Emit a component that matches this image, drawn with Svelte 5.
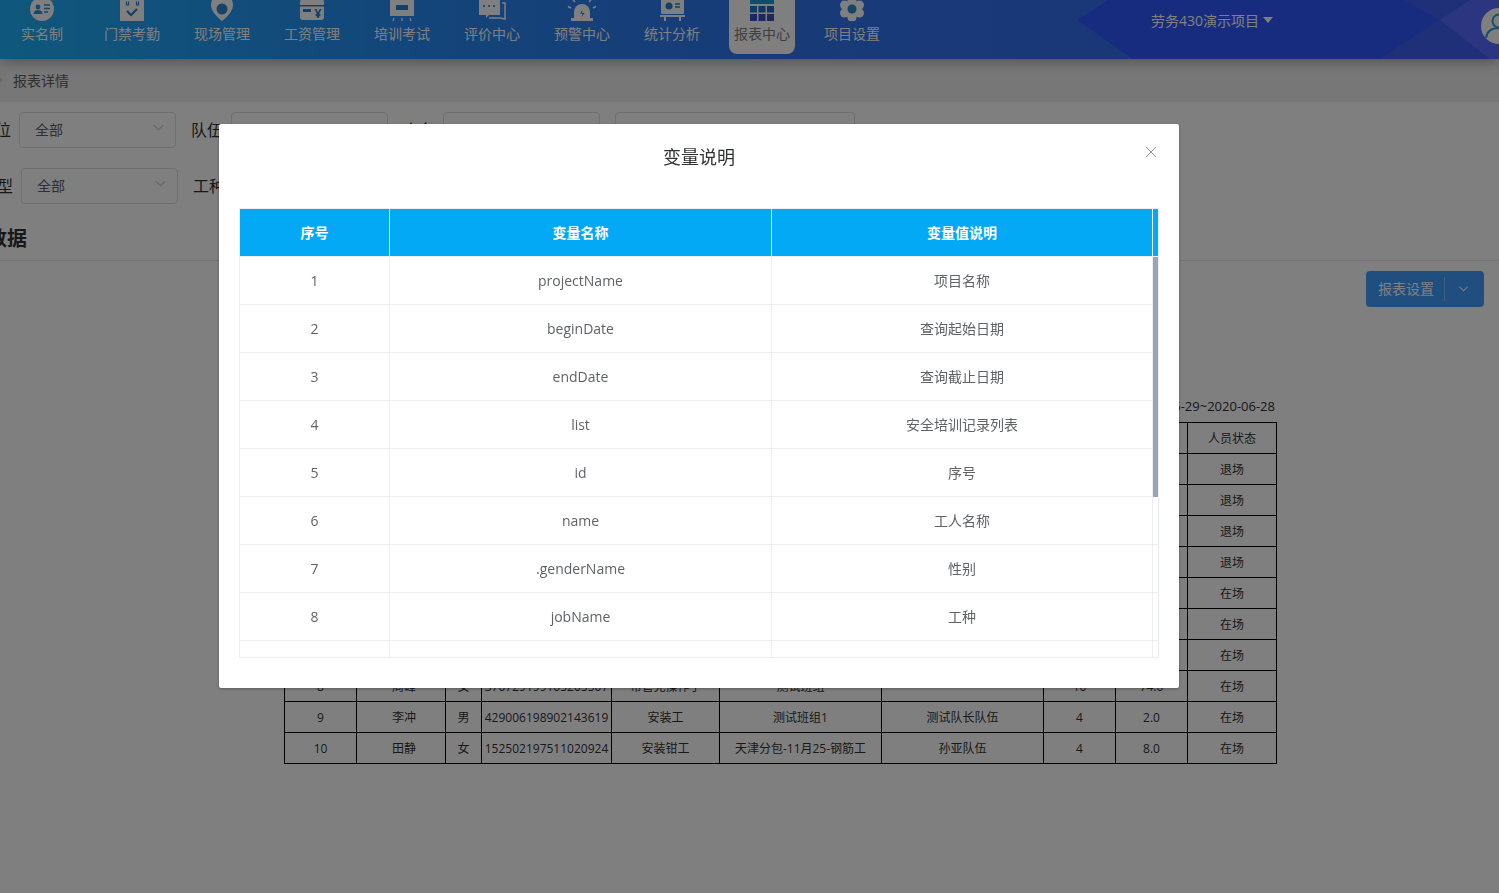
<script lang="ts">
    const navItems = ["实名制", "门禁考勤", "现场管理", "工资管理", "培训考试", "评价中心", "预警中心", "统计分析", "报表中心", "项目设置"];

    const variables = [
        ["1", "projectName", "项目名称"],
        ["2", "beginDate", "查询起始日期"],
        ["3", "endDate", "查询截止日期"],
        ["4", "list", "安全培训记录列表"],
        ["5", "id", "序号"],
        ["6", "name", "工人名称"],
        ["7", ".genderName", "性别"],
        ["8", "jobName", "工种"],
        ["9", "", ""],
    ];

    const reportRows = [
        { no: "1", status: "退场" },
        { no: "2", status: "退场" },
        { no: "3", status: "退场" },
        { no: "4", status: "退场" },
        { no: "5", status: "在场" },
        { no: "6", status: "在场" },
        { no: "7", status: "在场" },
        { no: "8", name: "周峰", sex: "女", card: "370729199105205507", job: "布管充操作手", group: "测试班组", days: "10", hours: "74.0", status: "在场" },
        { no: "9", name: "李冲", sex: "男", card: "429006198902143619", job: "安装工", group: "测试班组1", team: "测试队长队伍", days: "4", hours: "2.0", status: "在场" },
        { no: "10", name: "田静", sex: "女", card: "152502197511020924", job: "安装钳工", group: "天津分包-11月25-钢筋工", team: "孙亚队伍", days: "4", hours: "8.0", status: "在场" },
    ];
</script>

<div class="page">
    <header class="topbar">
        <svg class="topbar-bg" viewBox="0 0 1499 59" preserveAspectRatio="none">
            <polygon points="1077,20 1108,0 1405,0 1440,20 1380,59 1133,59" fill="#3058ff" />
            <polygon points="1405,0 1499,0 1499,59 1380,59 1440,20" fill="#4060f0" />
            <polygon points="1440,20 1470,0 1499,0 1499,59 1490,59" fill="#586aff" />
        </svg>
        <nav class="nav">
            {#each navItems as item, i}
                <div class="nav-item" class:active={i === 8}>
                    <svg class="nav-icon" viewBox="0 0 30 30">
                        {#if i === 0}
                            <circle cx="15" cy="18" r="12" fill="#fff" />
                            <circle cx="11" cy="16" r="2.4" fill="#2a90d8" />
                            <path d="M6.5 23c.4-3 2-4 4.5-4s4.100 1 4.500 4z" fill="#2a90d8" />
                            <path d="M17 14h6M17 17.500h6M17 21h4" stroke="#2a90d8" stroke-width="1.300" />
                        {:else if i === 1}
                            <path d="M3 4h24v26H3z" fill="#fff" />
                            <path d="M8 1v12M22 1v12" stroke="#fff" stroke-width="2" />
                            <path d="M9.500 10.500v3.500h2v-3.500M19.500 10.500v3.500h2v-3.500" fill="none" stroke="#2a80cc" stroke-width="1.200" />
                            <path d="M10 20l4 4 6-6" fill="none" stroke="#2a80cc" stroke-width="2.200" />
                        {:else if i === 2}
                            <path d="M15 3C8.500 3 4 8 4 14c0 6 6 12 11 16 5-4 11-10 11-16 0-6-4.500-11-11-11z" fill="#fff" />
                            <circle cx="15" cy="18" r="5.500" fill="#2a88cc" />
                        {:else if i === 3}
                            <rect x="3" y="8" width="24" height="21" rx="3" fill="#fff" />
                            <path d="M2 14h26v1.500H2z" fill="#2a80cc" />
                            <rect x="6" y="18" width="8" height="3" fill="#2a80cc" />
                            <text class="yen" x="21" y="27" text-anchor="middle">¥</text>
                        {:else if i === 4}
                            <rect x="3" y="5" width="24" height="20" fill="#fff" />
                            <rect x="9" y="14" width="12" height="5" fill="#2a80cc" />
                            <path d="M7 27l-1 3M15 27v3M23 27l1 3" stroke="#fff" stroke-width="1.300" />
                        {:else if i === 5}
                            <path d="M2 6h21v18H12l-3 3v-3H2z" fill="#fff" />
                            <path d="M25 12h3v16l-5-1H12" fill="none" stroke="#fff" stroke-width="1.500" />
                            <circle cx="7" cy="15" r="1.100" fill="#2a80cc" />
                            <circle cx="12" cy="15" r="1.100" fill="#2a80cc" />
                            <circle cx="17" cy="15" r="1.100" fill="#2a80cc" />
                        {:else if i === 6}
                            <path d="M7 27v-6a8 8 0 0 1 16 0v6z" fill="#fff" />
                            <rect x="4" y="27" width="22" height="3" fill="#fff" />
                            <path d="M15 9V5M8 11L5.500 8M22 11l2.500-3M4 17l-3-1.500M26 17l3-1.500" stroke="#fff" stroke-width="1.500" />
                            <path d="M15.500 19l-2.500 3.500h2.500L14.500 26l3-4h-2.500z" fill="#2a70c8" />
                        {:else if i === 7}
                            <rect x="4" y="6" width="23" height="17" rx="1" fill="#fff" />
                            <path d="M3 24h25v2H3zM7 26h2v4H7zM22 26h2v4h-2z" fill="#fff" />
                            <circle cx="12" cy="15" r="3.500" fill="#2a80cc" />
                            <path d="M18 13h5M18 16h5" stroke="#2a80cc" stroke-width="1.300" />
                        {:else if i === 8}
                            <rect x="3" y="4" width="24" height="9" fill="#1d9bd6" />
                            <rect x="3" y="15" width="7" height="6.500" fill="#1f79c8" />
                            <rect x="11.500" y="15" width="7" height="6.500" fill="#2070c8" />
                            <rect x="20" y="15" width="7" height="6.500" fill="#2268c4" />
                            <rect x="3" y="23" width="7" height="7" fill="#3a50c0" />
                            <rect x="11.500" y="23" width="7" height="7" fill="#3a50c0" />
                            <rect x="20" y="23" width="7" height="7" fill="#3a50c0" />
                        {:else}
                            <g fill="#fff">
                                <circle cx="15" cy="18" r="9" />
                                <circle cx="15" cy="9.500" r="4.500" />
                                <circle cx="15" cy="26.500" r="4.500" />
                                <circle cx="7.500" cy="14" r="4.500" />
                                <circle cx="22.500" cy="14" r="4.500" />
                                <circle cx="7.500" cy="22" r="4.500" />
                                <circle cx="22.500" cy="22" r="4.500" />
                            </g>
                            <circle cx="15" cy="18" r="4.500" fill="#2a88cc" />
                        {/if}
                    </svg>
                    <span>{item}</span>
                </div>
            {/each}
        </nav>
        <div class="project">
            <span>劳务430演示项目</span>
            <i class="caret"></i>
        </div>
        <svg class="avatar" viewBox="0 0 36 36">
            <circle cx="18" cy="18" r="18" fill="#fff" />
            <circle cx="18" cy="13" r="6.500" fill="none" stroke="#2a9fd8" stroke-width="2" />
            <path d="M5 30c1-7 6-10 13-10s12 3 13 10" fill="none" stroke="#2a9fd8" stroke-width="2" />
        </svg>
    </header>

    <div class="crumb">
        <svg class="crumb-arrow" viewBox="0 0 8 12"><path d="M1 1l5 5-5 5" fill="none" stroke="#c0c4cc" stroke-width="1.200" /></svg>
        <span>报表详情</span>
    </div>

    <div class="filters">
        <div class="filter-row">
            <span class="filter-label">单位</span>
            <div class="select"><span>全部</span><svg viewBox="0 0 12 8"><path d="M1 1l5 5 5-5" fill="none" stroke="#c0c4cc" stroke-width="1.100" /></svg></div>
            <span class="filter-label next">队伍</span>
            <div class="select"></div>
            <span class="filter-label next">人名</span>
            <div class="select"></div>
            <div class="select wide"></div>
        </div>
        <div class="filter-row row-two">
            <span class="filter-label">类型</span>
            <div class="select"><span>全部</span><svg viewBox="0 0 12 8"><path d="M1 1l5 5 5-5" fill="none" stroke="#c0c4cc" stroke-width="1.100" /></svg></div>
            <span class="filter-label next">工种</span>
        </div>
    </div>

    <div class="section-head"><h2>报表数据</h2></div>

    <div class="toolbar">
        <div class="split-btn">
            <span class="split-text">报表设置</span>
            <i class="split-line"></i>
            <svg viewBox="0 0 12 8"><path d="M1.500 1.500L6 6l4.500-4.500" fill="none" stroke="#fff" stroke-width="1.100" /></svg>
        </div>
    </div>

    <div class="report">
        <div class="report-date">统计日期：2020-05-29~2020-06-28</div>
        <table class="report-table">
            <colgroup>
                <col style="width:72px" /><col style="width:89px" /><col style="width:36px" /><col style="width:130px" /><col style="width:108px" /><col style="width:162px" /><col style="width:162px" /><col style="width:72px" /><col style="width:72px" /><col style="width:89px" />
            </colgroup>
            <thead>
                <tr><th></th><th></th><th></th><th></th><th></th><th></th><th></th><th></th><th></th><th>人员状态</th></tr>
            </thead>
            <tbody>
                {#each reportRows as row}
                    <tr>
                        <td>{row.no}</td><td class="name">{row.name ?? ""}</td><td>{row.sex ?? ""}</td><td>{row.card ?? ""}</td><td>{row.job ?? ""}</td><td>{row.group ?? ""}</td><td>{row.team ?? ""}</td><td>{row.days ?? ""}</td><td>{row.hours ?? ""}</td><td>{row.status}</td>
                    </tr>
                {/each}
            </tbody>
        </table>
    </div>
</div>

<div class="mask"></div>

<div class="modal">
    <div class="modal-title">变量说明</div>
    <svg class="modal-close" viewBox="0 0 12 12"><path d="M1 1l10 10M11 1L1 11" stroke="#909399" stroke-width="1" /></svg>
    <div class="var-table">
        <div class="var-row var-head">
            <div>序号</div><div>变量名称</div><div>变量值说明</div><div class="gutter"></div>
        </div>
        <div class="var-body">
            {#each variables as row}
                <div class="var-row">
                    <div>{row[0]}</div><div>{row[1]}</div><div class="var-desc">{row[2]}</div>
                </div>
            {/each}
            <div class="thumb"></div>
        </div>
    </div>
</div>

<style>
    :global(body) {
        margin: 0;
        overflow: hidden;
        background: #fff;
        font-family: "Open Sans", "Noto Sans CJK SC", sans-serif;
        font-size: 14px;
        color: #303133;
    }

    .page {
        width: 1499px;
        height: 893px;
        overflow: hidden;
        background: #fff;
    }

    .topbar {
        position: relative;
        height: 59px;
        display: flex;
        color: #fff;
        background: linear-gradient(90deg, #1fb0f8, #2888f4 30%, #3078f0 50%, #3470f0 70%);
        box-shadow: 0 2px 12px rgb(0 0 0 / 0.35);
        z-index: 1;
    }

    .topbar-bg {
        position: absolute;
        inset: 0;
        width: 100%;
        height: 100%;
    }

    .nav {
        position: relative;
        display: flex;
        margin-left: -3px;
    }

    .nav-item {
        width: 66px;
        height: 54px;
        margin: 0 12px;
        display: flex;
        flex-direction: column;
        align-items: center;
        border-radius: 0 0 8px 8px;
        white-space: nowrap;
        overflow: hidden;
    }

    .nav-item.active {
        background: #fff;
        color: #808080;
    }

    .nav-icon {
        width: 30px;
        height: 30px;
        margin-top: -9px;
        flex: none;
    }

    .nav-item span {
        margin-top: 1px;
        line-height: 24px;
    }

    .yen {
        font-size: 12px;
        font-weight: 700;
        fill: #2a80cc;
    }

    .project {
        position: absolute;
        left: 1151px;
        top: 10px;
        display: flex;
        align-items: center;
        line-height: 21px;
    }

    .caret {
        margin-left: 4px;
        margin-top: -2px;
        border: 5px solid transparent;
        border-top: 6px solid #fff;
        border-bottom: 0;
    }

    .avatar {
        position: absolute;
        left: 1481px;
        top: 8px;
        width: 36px;
        height: 36px;
    }

    .crumb {
        height: 43px;
        box-sizing: border-box;
        padding-bottom: 2px;
        display: flex;
        align-items: center;
        gap: 9px;
        margin-left: -4px;
        background: #eceeec;
        color: #606266;
    }

    .crumb-arrow {
        width: 8px;
        height: 12px;
    }

    .filters {
        padding-top: 10px;
        height: 99px;
        box-sizing: border-box;
    }

    .filter-row {
        display: flex;
        align-items: center;
        height: 36px;
        margin-left: -21px;
    }

    .row-two {
        margin-top: 20px;
        margin-left: -19px;
    }

    .filter-label {
        width: 32px;
        flex: none;
        font-size: 16px;
        line-height: 36px;
        white-space: nowrap;
        color: #303133;
        margin-right: 8px;
    }

    .filter-label.next {
        margin-left: 15px;
    }

    .select {
        width: 157px;
        height: 36px;
        flex: none;
        box-sizing: border-box;
        padding: 0 15px 2px;
        display: flex;
        align-items: center;
        justify-content: space-between;
        border: 1px solid #dcdfe6;
        border-radius: 4px;
        color: #606266;
    }

    .select svg {
        width: 11px;
        height: 8px;
        margin: -2px -4px 0 0;
    }

    .select.wide {
        width: 240px;
        margin-left: 15px;
    }

    .section-head {
        height: 60px;
        box-sizing: border-box;
        border-bottom: 1px solid #e4e7ed;
        margin-left: -53px;
    }

    h2 {
        margin: 0;
        padding-top: 23px;
        font-size: 20px;
        line-height: 30px;
        font-weight: 700;
    }

    .toolbar {
        display: flex;
        justify-content: flex-end;
        padding: 10px 15px 0 0;
    }

    .split-btn {
        width: 118px;
        height: 36px;
        display: flex;
        align-items: center;
        box-sizing: border-box;
        padding-left: 12px;
        border-radius: 4px;
        background: #409eff;
        color: #fff;
    }

    .split-text {
        width: 56px;
        padding-bottom: 2px;
    }

    .split-line {
        width: 1px;
        height: 24px;
        margin-left: 10px;
        background: rgb(255 255 255 / 0.35);
    }

    .split-btn svg {
        width: 11px;
        height: 8px;
        margin-left: 13px;
    }

    .report {
        width: 992px;
        margin: 90px 0 0 284px;
    }

    .report-date {
        text-align: right;
        font-size: 13px;
        line-height: 18px;
        padding-right: 1px;
        margin-bottom: 7px;
        white-space: nowrap;
    }

    .report-table {
        width: 992px;
        table-layout: fixed;
        border-collapse: collapse;
        font-size: 12px;
        color: #333;
    }

    .report-table th,
    .report-table td {
        height: 30px;
        padding: 0;
        border: 1px solid #000;
        text-align: center;
        font-weight: 400;
        white-space: nowrap;
        overflow: hidden;
    }

    .report-table td.name {
        padding-left: 6px;
    }

    .mask {
        position: fixed;
        inset: 0;
        background: rgb(0 0 0 / 0.5);
        z-index: 5;
    }

    .modal {
        position: fixed;
        left: 219px;
        top: 124px;
        width: 960px;
        height: 564px;
        box-sizing: border-box;
        padding: 84px 20px 0;
        background: #fff;
        border-radius: 2px;
        box-shadow: 0 1px 3px rgb(0 0 0 / 0.3);
        z-index: 6;
    }

    .modal-title {
        position: absolute;
        left: 0;
        right: 0;
        top: 20px;
        text-align: center;
        font-size: 18px;
        line-height: 26px;
        color: #303133;
    }

    .modal-close {
        position: absolute;
        right: 22px;
        top: 22px;
        width: 12px;
        height: 12px;
    }

    .var-table {
        height: 450px;
        box-sizing: border-box;
        border: 1px solid #ebeef5;
        overflow: hidden;
        color: #606266;
    }

    .var-row {
        display: grid;
        grid-template-columns: 150px 382px 381px;
        height: 48px;
        box-sizing: border-box;
        border-bottom: 1px solid #ebeef5;
    }

    .var-row > div {
        display: flex;
        align-items: center;
        justify-content: center;
        border-right: 1px solid #ebeef5;
    }

    .var-row > .var-desc {
        padding-bottom: 2px;
    }

    .var-head {
        grid-template-columns: 150px 382px 381px 5px;
        background: #03a9f4;
        color: #fff;
        font-size: 14px;
        font-weight: 700;
    }

    .var-head > div {
        border-right: 1px solid #fff;
        padding-bottom: 1px;
    }

    .var-head .gutter {
        border-right: 0;
    }

    .var-body {
        position: relative;
        height: 401px;
        overflow: hidden;
    }

    .thumb {
        position: absolute;
        right: 0;
        top: 0;
        width: 5px;
        height: 240px;
        background: #9aa5ad;
    }
</style>
